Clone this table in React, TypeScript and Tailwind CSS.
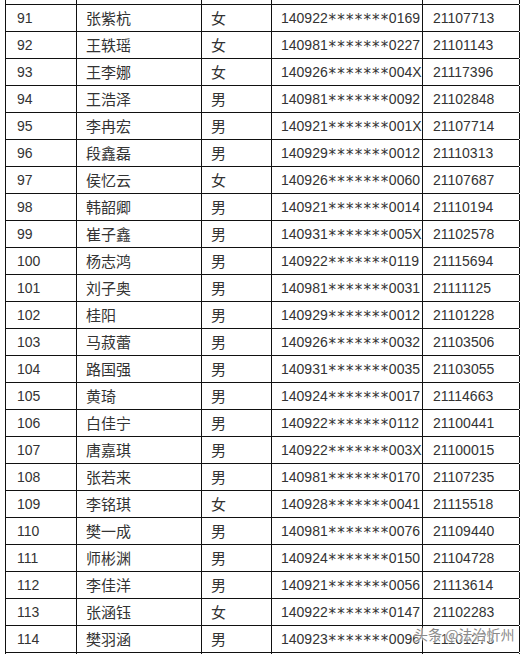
const rows: [string, string, string, string, string, string][] = [
  ["91", "张紫杭", "女", "140922", "0169", "21107713"],
  ["92", "王轶瑶", "女", "140981", "0227", "21101143"],
  ["93", "王李娜", "女", "140926", "004X", "21117396"],
  ["94", "王浩泽", "男", "140981", "0092", "21102848"],
  ["95", "李冉宏", "男", "140921", "001X", "21107714"],
  ["96", "段鑫磊", "男", "140929", "0012", "21110313"],
  ["97", "侯忆云", "女", "140926", "0060", "21107687"],
  ["98", "韩韶卿", "男", "140921", "0014", "21110194"],
  ["99", "崔子鑫", "男", "140931", "005X", "21102578"],
  ["100", "杨志鸿", "男", "140922", "0119", "21115694"],
  ["101", "刘子奥", "男", "140981", "0031", "21111125"],
  ["102", "桂阳", "男", "140929", "0012", "21101228"],
  ["103", "马菽蕾", "男", "140926", "0032", "21103506"],
  ["104", "路国强", "男", "140931", "0035", "21103055"],
  ["105", "黄琦", "男", "140924", "0017", "21114663"],
  ["106", "白佳宁", "男", "140922", "0112", "21100441"],
  ["107", "唐嘉琪", "男", "140922", "003X", "21100015"],
  ["108", "张若来", "男", "140981", "0170", "21107235"],
  ["109", "李铭琪", "女", "140928", "0041", "21115518"],
  ["110", "樊一成", "男", "140981", "0076", "21109440"],
  ["111", "师彬渊", "男", "140924", "0150", "21104728"],
  ["112", "李佳洋", "男", "140921", "0056", "21113614"],
  ["113", "张涵钰", "女", "140922", "0147", "21102283"],
  ["114", "樊羽涵", "男", "140923", "0096", "21101273"],
];

const num = "font-['Liberation_Sans',sans-serif] text-[14px]";
const cjk = "font-['Noto_Sans_CJK_SC',sans-serif] text-[15px]";
const cols = "grid grid-cols-[71px_125px_70px_151px_97px]";

function Stub({ h }: { h: string }) {
  return (
    <div className={`${cols} ${h}`}>
      {[0, 1, 2, 3, 4].map((i) => (
        <div key={i} className="border-r border-[#111]" />
      ))}
    </div>
  );
}

export default function App() {
  return (
    <div className="relative w-[523px] h-[654px] overflow-hidden bg-white text-[#333]">
      <div className="ml-[5px] w-[514px] border-l border-[#111]">
        <Stub h="h-[4px]" />
        {rows.map(([n, name, sex, pre, suf, code]) => (
          <div key={n} className={`${cols} h-[27px] border-t border-[#111]`}>
            <div className={`border-r border-[#111] pl-[11px] flex items-center ${num}`}>{n}</div>
            <div className={`border-r border-[#111] pl-[9px] flex items-center ${cjk}`}>{name}</div>
            <div className={`border-r border-[#111] pl-[9px] flex items-center ${cjk}`}>{sex}</div>
            <div className={`border-r border-[#111] pl-[9px] flex items-center whitespace-nowrap ${num}`}>
              {pre}
              <span className="font-['DejaVu_Sans_Mono',monospace] text-[15px] tracking-[-0.3px] relative top-[2px]">*******</span>
              {suf}
            </div>
            <div className={`border-r border-[#111] pl-[10px] flex items-center ${num}`}>{code}</div>
          </div>
        ))}
        <div className="border-t border-[#111]">
          <Stub h="h-[3px]" />
        </div>
      </div>

      {/* watermark */}
      <div className="absolute left-[414px] top-[624px] font-['Noto_Sans_CJK_SC',sans-serif] text-[14px] text-[#8a8a8a] [text-shadow:0_0_2px_#fff,0_0_2px_#fff,0_0_3px_#fff] whitespace-nowrap">
        头条 @法治忻州
      </div>
    </div>
  );
}
